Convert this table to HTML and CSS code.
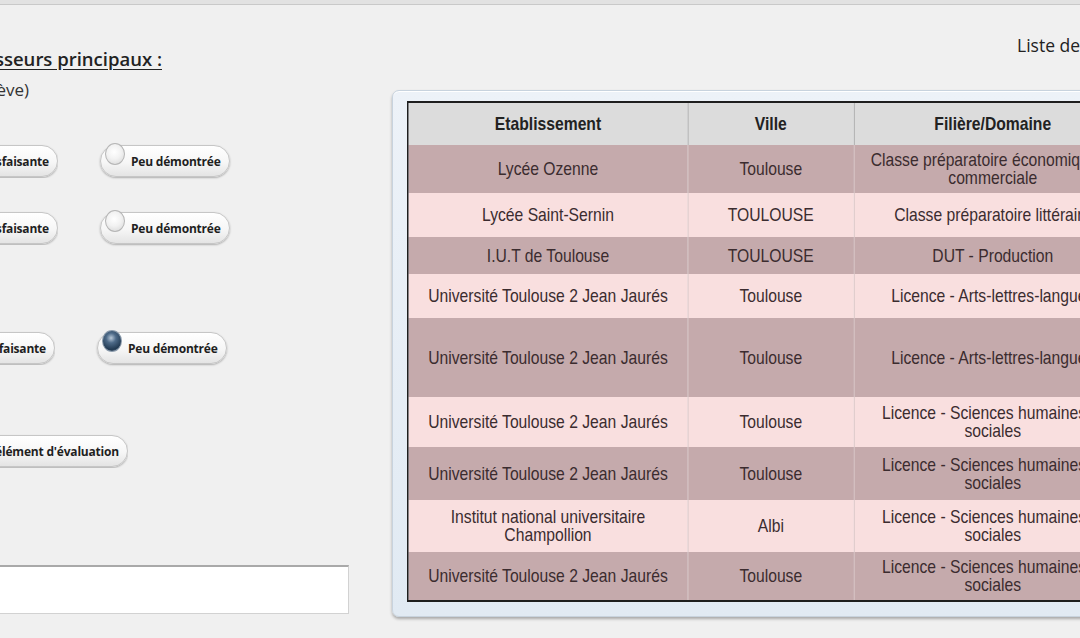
FILE: index.html
```html
<!DOCTYPE html>
<html lang="fr">
<head>
<meta charset="utf-8">
<title>Fiche avenir</title>
<link rel="stylesheet" href="styles.css">
</head>
<body>
<div class="topbar"></div>
<main class="page">
  <section class="left">
    <div class="clip heading-clip"><h2 class="heading">Avis des professeurs principaux :</h2></div>
    <div class="clip sub-clip"><p class="sub">(appréciation sur l'élève)</p></div>

    <div class="choice-row row1">
      <div class="clip btn-clip"><label class="opt"><span class="radio"></span>Satisfaisante</label></div>
      <label class="opt"><span class="radio"></span>Peu démontrée</label>
    </div>
    <div class="choice-row row2">
      <div class="clip btn-clip"><label class="opt"><span class="radio"></span>Satisfaisante</label></div>
      <label class="opt"><span class="radio"></span>Peu démontrée</label>
    </div>
    <div class="choice-row row3">
      <div class="clip btn-clip short"><label class="opt"><span class="radio"></span>Satisfaisante</label></div>
      <label class="opt"><span class="radio checked"></span>Peu démontrée</label>
    </div>
    <div class="choice-row row4">
      <div class="clip eval-clip"><label class="opt"><span class="radio"></span>Pas d'élément d'évaluation</label></div>
    </div>
    <div class="comment"></div>
  </section>

  <section class="right">
    <p class="list-title">Liste des vœux confirmés</p>
    <div class="panel">
      <div class="table-frame">
        <table class="wishes">
          <colgroup><col class="c1"><col class="c2"><col class="c3"></colgroup>
          <thead>
            <tr class="h42"><th>Etablissement</th><th>Ville</th><th>Filière/Domaine</th></tr>
          </thead>
          <tbody>
            <tr class="dark h48"><td>Lycée Ozenne</td><td>Toulouse</td><td>Classe préparatoire économique et commerciale</td></tr>
            <tr class="light h44"><td>Lycée Saint-Sernin</td><td>TOULOUSE</td><td>Classe préparatoire littéraire</td></tr>
            <tr class="dark h37"><td>I.U.T de Toulouse</td><td>TOULOUSE</td><td>DUT - Production</td></tr>
            <tr class="light h44"><td>Université Toulouse 2 Jean Jaurés</td><td>Toulouse</td><td>Licence - Arts-lettres-langues</td></tr>
            <tr class="dark h79"><td>Université Toulouse 2 Jean Jaurés</td><td>Toulouse</td><td>Licence - Arts-lettres-langues</td></tr>
            <tr class="light h50"><td>Université Toulouse 2 Jean Jaurés</td><td>Toulouse</td><td>Licence - Sciences humaines et sociales</td></tr>
            <tr class="dark h53"><td>Université Toulouse 2 Jean Jaurés</td><td>Toulouse</td><td>Licence - Sciences humaines et sociales</td></tr>
            <tr class="light h52"><td>Institut national universitaire Champollion</td><td>Albi</td><td>Licence - Sciences humaines et sociales</td></tr>
            <tr class="dark h48"><td>Université Toulouse 2 Jean Jaurés</td><td>Toulouse</td><td>Licence - Sciences humaines et sociales</td></tr>
          </tbody>
        </table>
      </div>
    </div>
  </section>
</main>
</body>
</html>
```

FILE: styles.css
```css
html, body {
  margin: 0;
  padding: 0;
  overflow: hidden;
  background: #f0f0f0;
}

body {
  width: 1080px;
  height: 638px;
  font-family: "Open Sans", "DejaVu Sans", sans-serif;
  color: #2a2a2a;
}

.topbar {
  height: 4px;
  background: #e2e2e2;
  border-bottom: 1px solid #c9c9c9;
}

.page {
  display: flex;
  align-items: flex-start;
}

.left {
  flex: 0 0 380px;
  display: flex;
  flex-direction: column;
  align-items: flex-start;
}

.clip {
  display: flex;
  justify-content: flex-end;
  overflow: hidden;
  flex: none;
}

.heading-clip { width: 162px; margin-top: 41px; }
.sub-clip { width: 29px; margin-top: 7px; }

.heading {
  margin: 0;
  white-space: nowrap;
  font-size: 18.5px;
  line-height: 26px;
  font-weight: 600;
  color: #222;
  text-decoration: underline;
  text-underline-offset: 3px;
}

.sub {
  margin: 0;
  white-space: nowrap;
  font-size: 17px;
  line-height: 22px;
  color: #333;
}

.choice-row {
  display: flex;
  align-items: center;
  gap: 42px;
  height: 34px;
}

.row1 { margin-top: 43px; }
.row2 { margin-top: 33px; }
.row3 { margin-top: 86px; }
.row4 { margin-top: 69px; }

.btn-clip { width: 58px; height: 34px; align-items: center; }
.btn-clip.short { width: 55px; }
.eval-clip { width: 128px; height: 34px; align-items: center; }

.opt {
  display: inline-flex;
  align-items: center;
  gap: 6px;
  flex: none;
  height: 30px;
  padding: 0 8px 0 4px;
  border: 1px solid #c6c6c6;
  border-radius: 16px;
  background: linear-gradient(#ffffff 0%, #f6f6f6 55%, #e4e4e4 100%);
  box-shadow: 0 1px 2px rgba(0, 0, 0, 0.28);
  font-size: 12px;
  font-weight: 700;
  letter-spacing: -0.2px;
  color: #1f1f1f;
  white-space: nowrap;
}

.radio {
  flex: none;
  align-self: flex-start;
  margin-top: -3px;
  width: 18px;
  height: 20px;
  border-radius: 50%;
  border: 1px solid #b5b5b5;
  background: radial-gradient(circle at 45% 40%, #ffffff 0%, #f2f2f2 45%, #d4d4d4 100%);
}

.radio.checked {
  border-color: #8a9aab;
  background: radial-gradient(circle at 45% 35%, #b8c8d8 0%, #4d6a88 30%, #223a52 70%, #6d8296 100%);
}

.comment {
  margin-top: 97px;
  margin-left: -4px;
  width: 353px;
  height: 49px;
  box-sizing: border-box;
  background: #ffffff;
  border: 1px solid #d2d2d2;
  border-top: 2px solid #a9a9a9;
}

.right {
  flex: none;
  margin-left: 12px;
}

.list-title {
  margin: 30px 0 0;
  padding-left: 625px;
  font-size: 17.5px;
  line-height: 20px;
  color: #222;
  white-space: nowrap;
}

.panel {
  margin-top: 35px;
  display: inline-block;
  padding: 10px 15px 14px 14px;
  border: 1px solid #c8d3de;
  border-radius: 7px;
  background: linear-gradient(#edf2f8, #e1eaf3);
  box-shadow: 0 2px 3px rgba(0, 0, 0, 0.3), inset 0 1px 0 #ffffff;
}

/* the table of the reference is drawn in a condensed face: compress it horizontally */
.table-frame {
  border: 2px solid #1e1e1e;
  border-left-width: 2.4px;
  border-right-width: 2.4px;
  transform: scaleX(0.848);
  transform-origin: 0 0;
}

.wishes {
  border-collapse: collapse;
  table-layout: fixed;
  width: 852px;
  font-family: "Liberation Sans", Arial, sans-serif;
  font-size: 18.5px;
  line-height: 18px;
  color: #3b2c2f;
}

.c1 { width: 329px; }
.c2 { width: 196px; }
.c3 { width: 327px; }

.wishes th,
.wishes td {
  padding: 0 8px;
  text-align: center;
  vertical-align: middle;
  border-left: 1.2px solid #c9b8b8;
}

.wishes th:first-child,
.wishes td:first-child {
  border-left: none;
}

.wishes th {
  background: #dcdcdc;
  color: #222;
  font-weight: 700;
  border-left-color: #a9a9a9;
}

.wishes tr.dark td { background: #c5aaac; border-left-color: #d8c6c6; }
.wishes tr.light td { background: #f9dfdf; border-left-color: #d9c7c7; }

.h37 { height: 37px; }
.h42 { height: 42px; }
.h44 { height: 44px; }
.h48 { height: 48px; }
.h50 { height: 50px; }
.h52 { height: 52px; }
.h53 { height: 53px; }
.h79 { height: 79px; }
```
